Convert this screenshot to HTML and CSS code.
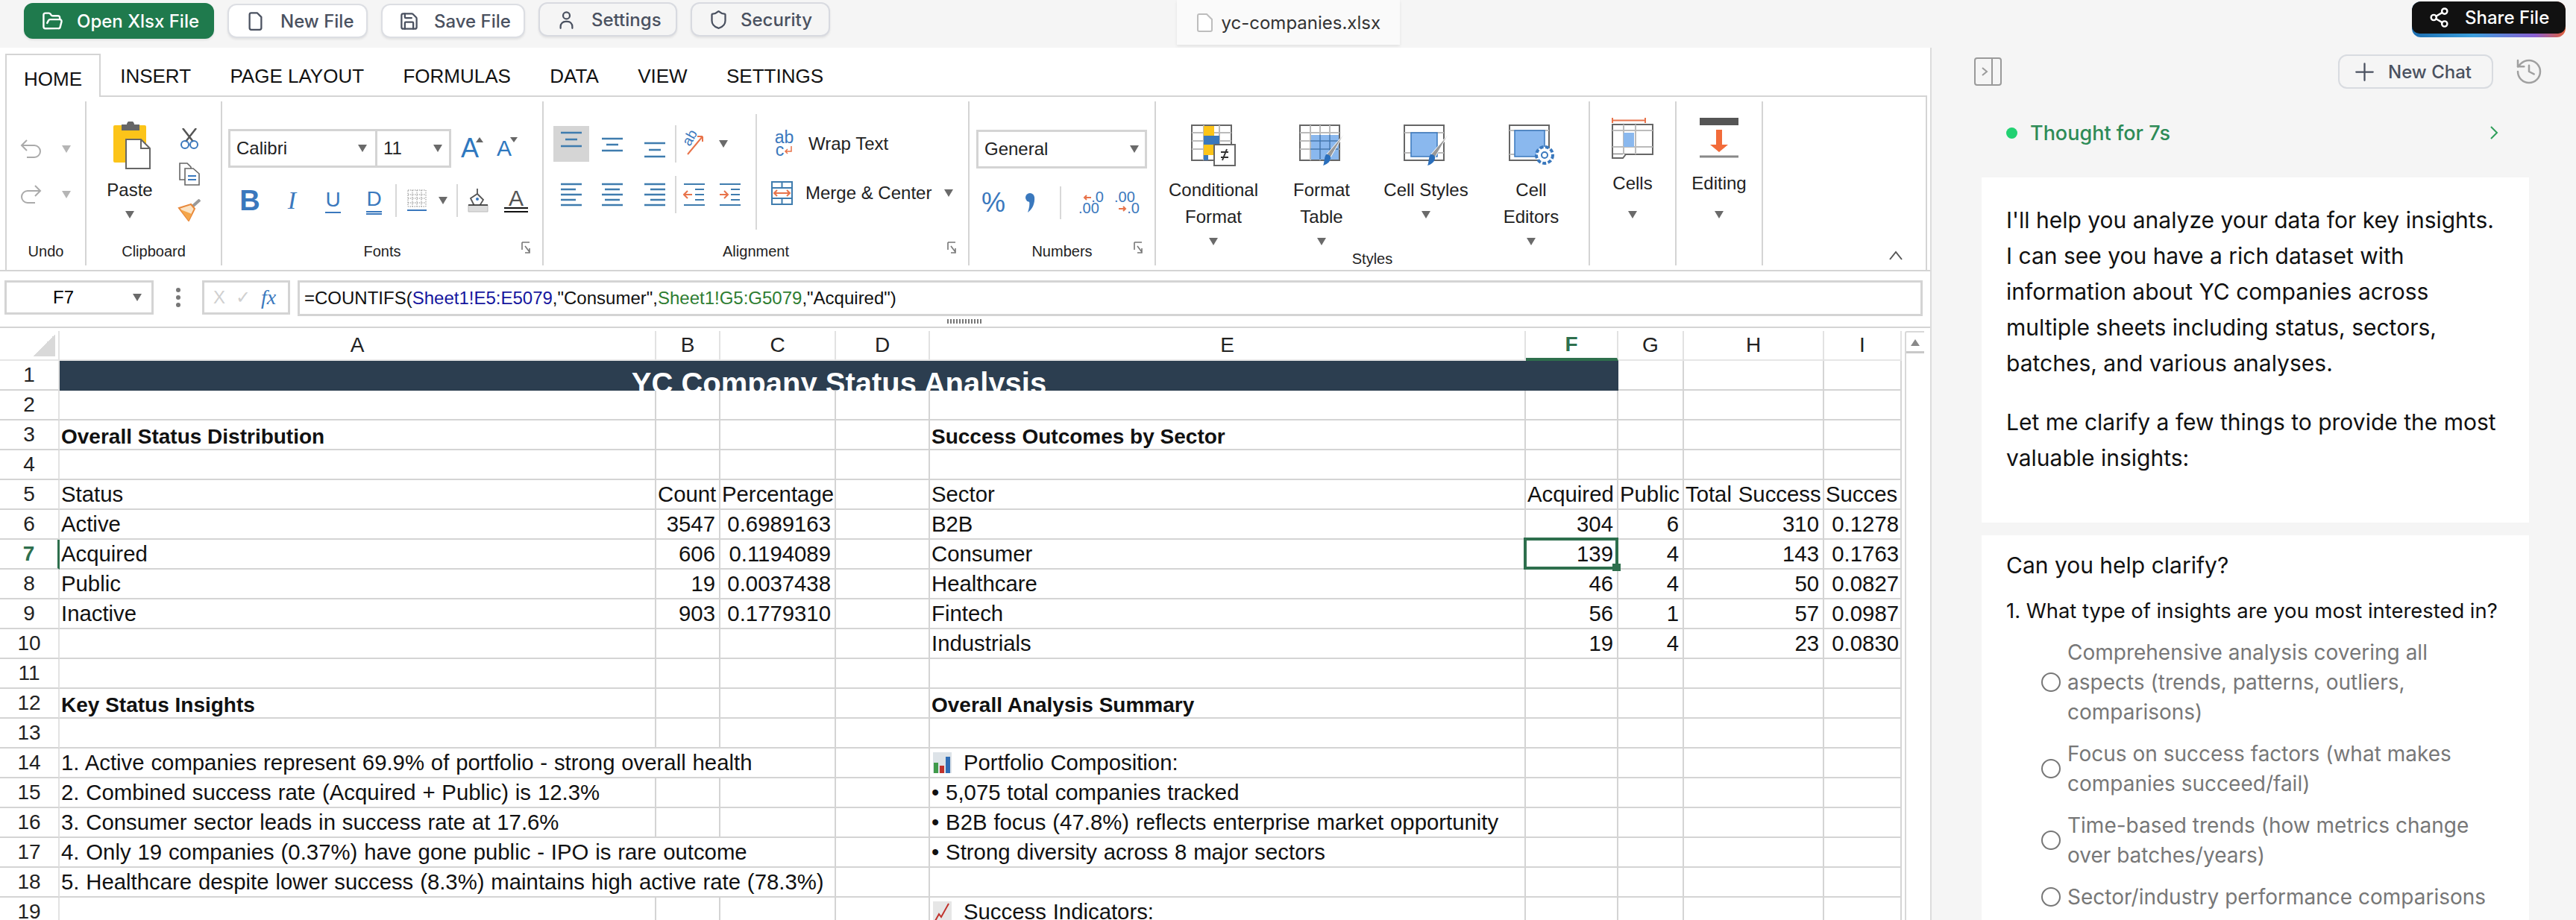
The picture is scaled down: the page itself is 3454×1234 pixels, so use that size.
FILE: index.html
```html
<!DOCTYPE html>
<html lang="en">
<head>
<meta charset="utf-8">
<title>yc-companies.xlsx</title>
<link rel="stylesheet" href="styles.css">
</head>
<body>
<div class="app">
  <header class="topbar">
    <div class="actions">
      <button class="btn primary"><svg class="ic i-29" viewBox="0 0 24 24"><path d="m6 14 1.5-2.9A2 2 0 0 1 9.24 10H20a2 2 0 0 1 1.94 2.5l-1.54 6a2 2 0 0 1-1.95 1.5H4a2 2 0 0 1-2-2V5a2 2 0 0 1 2-2h3.9a2 2 0 0 1 1.69.9l.81 1.2a2 2 0 0 0 1.67.9H18a2 2 0 0 1 2 2v2"/></svg>Open Xlsx File</button>
      <button class="btn w-new"><svg class="ic i-27" viewBox="0 0 24 24"><path d="M14 2H7a2 2 0 0 0-2 2v16a2 2 0 0 0 2 2h10a2 2 0 0 0 2-2V7z"/></svg>New File</button>
      <button class="btn w-save"><svg class="ic i-27" viewBox="0 0 24 24"><path d="M15.2 3a2 2 0 0 1 1.4.6l3.8 3.8a2 2 0 0 1 .6 1.4V19a2 2 0 0 1-2 2H5a2 2 0 0 1-2-2V5a2 2 0 0 1 2-2z"/><path d="M17 21v-7a1 1 0 0 0-1-1H8a1 1 0 0 0-1 1v7"/><path d="M7 3v4a1 1 0 0 0 1 1h7"/></svg>Save File</button>
      <button class="btn ghost w-set"><svg class="ic i-27" viewBox="0 0 24 24"><circle cx="12" cy="7" r="4"/><path d="M5 22v-2a6 6 0 0 1 6-6h2a6 6 0 0 1 6 6v2"/></svg>Settings</button>
      <button class="btn ghost w-sec"><svg class="ic i-27" viewBox="0 0 24 24"><path d="M20 13c0 5-3.5 7.5-7.66 8.95a1 1 0 0 1-.67-.01C7.5 20.5 4 18 4 13V6a1 1 0 0 1 1-1c2 0 4.5-1.2 6.24-2.72a1.17 1.17 0 0 1 1.52 0C14.51 3.81 17 5 19 5a1 1 0 0 1 1 1z"/></svg>Security</button>
    </div>
    <div class="filetab"><svg class="file-ic" viewBox="0 0 21 25"><path d="M3 1h10l7 7v14a2 2 0 0 1-2 2H3a2 2 0 0 1-2-2V3a2 2 0 0 1 2-2z"/></svg>yc-companies.xlsx</div>
    <div class="share-wrap">
      <button class="share"><span class="share-in"><svg class="ic i-29" viewBox="0 0 24 24"><circle cx="18" cy="5" r="3"/><circle cx="6" cy="12" r="3"/><circle cx="18" cy="19" r="3"/><line x1="8.6" y1="13.5" x2="15.4" y2="17.5"/><line x1="15.4" y1="6.5" x2="8.6" y2="10.5"/></svg>Share File</span></button>
    </div>
  </header>

  <main class="main">
    <section class="sheet">
      <nav class="tabs">
        <span class="tab home">HOME</span>
        <span class="tab">INSERT</span>
        <span class="tab">PAGE LAYOUT</span>
        <span class="tab">FORMULAS</span>
        <span class="tab">DATA</span>
        <span class="tab">VIEW</span>
        <span class="tab">SETTINGS</span>
      </nav>
      <div class="ribbon-wrap">
      <div class="ribbon">
        <div class="group g-undo">
          <div class="gbody undo-body">
            <div class="undo-row"><svg width="31" height="26" viewBox="0 0 31 26" class="sv-undo"><path d="M3 8H20a8 8 0 0 1 0 16H10M10 1 3 8l7 7"/></svg><i class="tri"></i></div>
            <div class="undo-row"><svg width="31" height="26" viewBox="0 0 31 26" class="sv-undo"><path d="M28 8H11a8 8 0 0 0 0 16h10M21 1l7 7-7 7"/></svg><i class="tri"></i></div>
          </div>
          <div class="gtitle">Undo</div>
        </div>

        <div class="group g-clip">
          <div class="gbody clip-body">
            <div class="paste">
              <svg width="50" height="64" viewBox="0 0 50 64"><rect y="5" width="44" height="50" rx="2" fill="#fcc419"/><path d="M11 4h7a5 5 0 0 1 10 0h7v8H11z" fill="#666"/><path d="M17 24h20l12 12v27H17z" fill="#fff" stroke="#666" stroke-width="2"/><path d="M37 24v12h12" fill="none" stroke="#666" stroke-width="2"/></svg>
              <div class="tool-label">Paste</div>
              <i class="tri"></i>
            </div>
            <div class="clip-side">
              <svg width="28" height="28" viewBox="0 0 28 28"><path d="M5 0 19 18M23 0 9 18" stroke="#555" stroke-width="2.5" fill="none"/><circle cx="8" cy="22" r="5" fill="none" stroke="#3a78bd" stroke-width="2"/><circle cx="20" cy="22" r="5" fill="none" stroke="#3a78bd" stroke-width="2"/></svg>
              <svg width="28" height="31" viewBox="0 0 28 31"><path d="M1 1h10l5 5v17H1z" fill="#fff" stroke="#666" stroke-width="1.6"/><path d="M8 8h11l8 7v15H8z" fill="#fff" stroke="#666" stroke-width="1.6"/><path d="M12 18h11M12 23h11" stroke="#3a78bd" stroke-width="1.8"/></svg>
              <svg width="32" height="30" viewBox="0 0 32 30"><path d="M20 10 30 1" stroke="#999" stroke-width="4"/><path d="M2 12 18 7l5 6-8 16z" fill="#fbe3c4" stroke="#e8883a" stroke-width="2"/><path d="M4 14 15 29l4-9z" fill="#f4a64a"/></svg>
            </div>
          </div>
          <div class="gtitle">Clipboard</div>
        </div>

        <div class="group g-fonts">
          <div class="gbody">
            <div class="font-row">
              <div class="select font-name"><span>Calibri</span><i class="tri"></i></div>
              <div class="select font-size"><span>11</span><i class="tri"></i></div>
              <span class="grow">A<i class="mini up"></i></span>
              <span class="grow small">A<i class="mini"></i></span>
            </div>
            <div class="fmt-row">
              <span class="fmt bold">B</span>
              <span class="fmt ital">I</span>
              <span class="fmt under">U</span>
              <span class="fmt dbl">D</span>
              <i class="sep"></i>
              <svg width="26" height="30" viewBox="0 0 26 30"><path d="M1 1h24v22H1zM1 7h24M1 12h24M1 18h24M7 1v22M13 1v22M19 1v22" fill="none" stroke="#888" stroke-width="1" stroke-dasharray="1.5 1.5"/><path d="M0 28h26" stroke="#3a78bd" stroke-width="2"/></svg>
              <i class="tri"></i>
              <i class="sep"></i>
              <svg width="28" height="32" viewBox="0 0 28 32"><path d="M13 0v8M4 13l9-6 8 8-5 8H9z" fill="none" stroke="#555" stroke-width="1.8"/><circle cx="13" cy="14" r="2" fill="#3a78bd"/><path d="M1 22h26v9H1z" fill="#ddd" stroke="#bbb"/><path d="M1 22h26" stroke="#222" stroke-width="1.5"/></svg>
              <span class="color-a">A</span>
            </div>
          </div>
          <div class="gtitle">Fonts</div>
          <svg class="corner" viewBox="0 0 14 20"><path d="M1 1h10M1 1v10M5 6l6 8M11 9v6H5" fill="none" stroke="#777" stroke-width="1.6"/></svg>
        </div>

        <div class="group g-align">
          <div class="gbody align-body">
            <div class="align-grid">
              <span class="cell-on"><svg width="48" height="48" viewBox="0 0 48 48" class="sv-line"><path d="M10 9h28M16 18h16M10 27h28"/></svg></span>
              <svg width="48" height="48" viewBox="0 0 48 48" class="sv-line"><path d="M10 17h28M16 25h16M10 33h28"/></svg>
              <svg width="48" height="48" viewBox="0 0 48 48" class="sv-line"><path d="M10 23h28M16 32h16M10 41h28"/></svg>
              <i class="sep tall"></i>
              <span class="orient"><svg width="34" height="36" viewBox="0 0 34 36"><path d="M8 32 28 8M28 8h-7M28 8v7" stroke="#e8734a" stroke-width="2" fill="none"/></svg><span class="orient-t">ab</span></span>
              <i class="tri t-left"></i>
              <svg width="48" height="32" viewBox="0 0 48 32" class="sv-line"><path d="M10 2h28M10 9h20M10 16h28M10 23h20M10 30h28"/></svg>
              <svg width="48" height="32" viewBox="0 0 48 32" class="sv-line"><path d="M10 2h28M14 9h20M10 16h28M14 23h20M10 30h28"/></svg>
              <svg width="48" height="32" viewBox="0 0 48 32" class="sv-line"><path d="M10 2h28M18 9h20M10 16h28M18 23h20M10 30h28"/></svg>
              <i class="sep tall"></i>
              <svg width="30" height="32" viewBox="0 0 30 32"><path d="M1 2h28M1 30h28M16 9h12M16 16h12M16 23h12" stroke="#3f7cae" stroke-width="2"/><path d="M12 16H2M6 11l-5 5 5 5" stroke="#e8734a" stroke-width="2" fill="none"/></svg>
              <svg width="30" height="32" viewBox="0 0 30 32"><path d="M1 2h28M1 30h28M16 9h12M16 16h12M16 23h12" stroke="#3f7cae" stroke-width="2"/><path d="M1 16h10M7 11l5 5-5 5" stroke="#e8734a" stroke-width="2" fill="none"/></svg>
            </div>
            <i class="vsep"></i>
            <div class="wrap-col">
              <div class="wrap-row"><span class="wrap-ic"><span>ab</span><span class="w-c">c<svg width="12" height="12" viewBox="0 0 12 12"><path d="M10 0v7H2M5 4 2 7l3 3" fill="none" stroke="#e8734a" stroke-width="1.5"/></svg></span></span><span>Wrap Text</span></div>
              <div class="wrap-row merge"><svg width="29" height="32" viewBox="0 0 29 32"><path d="M1 1h27v30H1zM1 9h27M1 23h27M14.500 1v8M14.500 23v8" fill="none" stroke="#3f7cae" stroke-width="2"/><path d="M4 16h21M8 12l-4 4 4 4M21 12l4 4-4 4" fill="none" stroke="#e8734a" stroke-width="2"/></svg><span>Merge &amp; Center</span><i class="tri"></i></div>
            </div>
          </div>
          <div class="gtitle">Alignment</div>
          <svg class="corner" viewBox="0 0 14 20"><path d="M1 1h10M1 1v10M5 6l6 8M11 9v6H5" fill="none" stroke="#777" stroke-width="1.6"/></svg>
        </div>

        <div class="group g-num">
          <div class="gbody">
            <div class="select num-select"><span>General</span><i class="tri"></i></div>
            <div class="num-row">
              <span class="pct">%</span>
              <svg width="16" height="28" viewBox="0 0 16 28"><circle cx="8" cy="7" r="6" fill="#3a78bd"/><path d="M14 6c1 9-3 17-9 21 2-6 3-11 2-15z" fill="#3a78bd"/></svg>
              <i class="sep"></i>
              <span class="dec"><span class="dec-l right"><svg width="11" height="10" viewBox="0 0 11 10"><path d="M11 5H2M5 2 2 5l3 3" stroke="#e8734a" stroke-width="2" fill="none"/></svg>.0</span><span class="dec-l">.00</span></span>
              <span class="dec"><span class="dec-l">.00</span><span class="dec-l right"><svg width="11" height="10" viewBox="0 0 11 10"><path d="M0 5h9M6 2l3 3-3 3" stroke="#e8734a" stroke-width="2" fill="none"/></svg>.0</span></span>
            </div>
          </div>
          <div class="gtitle">Numbers</div>
          <svg class="corner" viewBox="0 0 14 20"><path d="M1 1h10M1 1v10M5 6l6 8M11 9v6H5" fill="none" stroke="#777" stroke-width="1.6"/></svg>
        </div>

        <div class="group g-styles">
          <div class="gbody styles-body">
            <div class="stool">
              <svg width="60" height="56" viewBox="0 0 60 56"><rect x="1" y="1" width="53" height="47" fill="#fff" stroke="#666" stroke-width="2"/><path d="M1 11h53M1 22h53M1 33h53M17 1v47M38 1v47" stroke="#bbb" stroke-width="2"/><rect x="17" y="2" width="14" height="13" fill="#fcc419"/><rect x="17" y="15" width="21" height="12" fill="#3a78bd"/><rect x="17" y="27" width="14" height="14" fill="#fcc419"/><rect x="17" y="41" width="6" height="7" fill="#3a78bd"/><rect x="31" y="27" width="28" height="28" fill="#fff" stroke="#666" stroke-width="2"/><path d="M40 37h10M40 44h10M48 33l-6 15" stroke="#333" stroke-width="2"/></svg>
              <div class="tool-label">Conditional<br>Format</div><i class="tri"></i>
            </div>
            <div class="stool">
              <svg width="60" height="56" viewBox="0 0 60 56"><rect x="1" y="1" width="53" height="47" fill="#fff" stroke="#666" stroke-width="2"/><rect x="15" y="14" width="38" height="33" fill="#8ab8ee"/><path d="M1 11h53M1 22h53M1 33h53M15 1v47M28 1v47M41 1v47" stroke="#bbb" stroke-width="2"/><path d="M15 22h38M15 33h38M28 14v33M41 14v33" stroke="#3a78bd" stroke-width="1.5"/><path d="M60 13 42 44l-6-3z" fill="#999" stroke="#fff"/><path d="M36 40c4 0 7 2 6 6-1 5-6 8-10 9 2-3 1-10 4-15z" fill="#2a6ebb"/></svg>
              <div class="tool-label">Format<br>Table</div><i class="tri"></i>
            </div>
            <div class="stool">
              <svg width="60" height="56" viewBox="0 0 60 56"><rect x="1" y="1" width="53" height="47" fill="#fff" stroke="#666" stroke-width="2"/><path d="M1 11h53M1 38h53" stroke="#bbb" stroke-width="2"/><rect x="10" y="11" width="35" height="32" fill="#8ab8ee" stroke="#3a78bd" stroke-width="1.5"/><path d="M60 13 42 44l-6-3z" fill="#999" stroke="#fff"/><path d="M36 40c4 0 7 2 6 6-1 5-6 8-10 9 2-3 1-10 4-15z" fill="#2a6ebb"/></svg>
              <div class="tool-label">Cell Styles</div><i class="tri"></i>
            </div>
            <div class="stool">
              <svg width="64" height="56" viewBox="0 0 64 56"><rect x="3" y="1" width="53" height="47" fill="#fff" stroke="#666" stroke-width="2"/><path d="M3 8h53M3 40h53" stroke="#bbb" stroke-width="2"/><rect x="10" y="8" width="40" height="35" fill="#8ab8ee" stroke="#3a78bd" stroke-width="1.5"/><circle cx="50" cy="41" r="11" fill="#fff" stroke="#3a78bd" stroke-width="4" stroke-dasharray="5 2.500"/><circle cx="50" cy="41" r="4" fill="#fff" stroke="#3a78bd" stroke-width="2"/></svg>
              <div class="tool-label">Cell<br>Editors</div><i class="tri"></i>
            </div>
          </div>
          <div class="gtitle low">Styles</div>
        </div>

        <div class="group g-single">
          <div class="gbody single-body">
            <svg width="56" height="55" viewBox="0 0 56 55"><path d="M1 3.500h44M1 0v7M45 0v7" stroke="#e8734a" stroke-width="2" fill="none"/><rect x="1" y="9" width="54" height="40" fill="#fff" stroke="#666" stroke-width="2"/><path d="M1 17h54M1 39h54M16 9v40M32 9v40" stroke="#bbb" stroke-width="2"/><rect x="16" y="20" width="14" height="19" fill="#8ab8ee"/><path d="M1 49v5h14l4-5" fill="#fff" stroke="#666" stroke-width="2"/></svg>
            <div class="tool-label">Cells</div><i class="tri"></i>
          </div>
        </div>

        <div class="group g-single">
          <div class="gbody single-body">
            <svg width="52" height="55" viewBox="0 0 52 55"><rect width="52" height="10" y="0" fill="#555"/><rect x="1" y="10" width="50" height="42" fill="#fff"/><path d="M0 52h52" stroke="#888" stroke-width="3"/><path d="M22 16h8v20h8L26 46 14 36h8z" fill="#f26b3a"/></svg>
            <div class="tool-label">Editing</div><i class="tri"></i>
          </div>
        </div>

        <div class="rest"><svg width="20" height="14" viewBox="0 0 20 14"><path d="M2 12 10 2l8 10" fill="none" stroke="#555" stroke-width="2"/></svg></div>
      </div>
      </div>

      <div class="formula-bar">
        <div class="namebox"><span>F7</span><i class="tri"></i></div>
        <div class="kebab"><i></i><i></i><i></i></div>
        <div class="fxbox"><span class="fx-x">X</span><span class="fx-c">✓</span><span class="fx-f">fx</span></div>
        <div class="fx-input">=COUNTIFS(<span class="ref-b">Sheet1!E5:E5079</span>,"Consumer",<span class="ref-g">Sheet1!G5:G5079</span>,"Acquired")</div>
      </div>
      <div class="splitter"><i></i></div>

      <div class="gridwrap">
        <table class="grid">
          <colgroup><col class="c0"><col class="ca"><col class="cb"><col class="cc"><col class="cd"><col class="ce"><col class="cf"><col class="cg"><col class="ch"><col class="ci"></colgroup>
          <thead>
            <tr><th class="corner-cell"><i></i></th><th>A</th><th>B</th><th>C</th><th>D</th><th>E</th><th class="on">F</th><th>G</th><th>H</th><th>I</th></tr>
          </thead>
          <tbody>
            <tr><th>1</th><td colspan="6" class="title-cell"><div>YC Company Status Analysis</div></td><td></td><td></td><td></td></tr>
            <tr><th>2</th><td></td><td></td><td></td><td></td><td></td><td></td><td></td><td></td><td></td></tr>
            <tr><th>3</th><td class="b">Overall Status Distribution</td><td></td><td></td><td></td><td class="b">Success Outcomes by Sector</td><td></td><td></td><td></td><td></td></tr>
            <tr><th>4</th><td></td><td></td><td></td><td></td><td></td><td></td><td></td><td></td><td></td></tr>
            <tr><th>5</th><td>Status</td><td>Count</td><td>Percentage</td><td></td><td>Sector</td><td>Acquired</td><td>Public</td><td>Total Success</td><td>Succes</td></tr>
            <tr><th>6</th><td>Active</td><td class="r">3547</td><td class="r">0.6989163</td><td></td><td>B2B</td><td class="r">304</td><td class="r">6</td><td class="r">310</td><td class="r e">0.1278</td></tr>
            <tr><th class="row-on">7</th><td>Acquired</td><td class="r">606</td><td class="r">0.1194089</td><td></td><td>Consumer</td><td class="r sel">139<i class="sel-box"></i><i class="sel-handle"></i></td><td class="r">4</td><td class="r">143</td><td class="r e">0.1763</td></tr>
            <tr><th>8</th><td>Public</td><td class="r">19</td><td class="r">0.0037438</td><td></td><td>Healthcare</td><td class="r">46</td><td class="r">4</td><td class="r">50</td><td class="r e">0.0827</td></tr>
            <tr><th>9</th><td>Inactive</td><td class="r">903</td><td class="r">0.1779310</td><td></td><td>Fintech</td><td class="r">56</td><td class="r">1</td><td class="r">57</td><td class="r e">0.0987</td></tr>
            <tr><th>10</th><td></td><td></td><td></td><td></td><td>Industrials</td><td class="r">19</td><td class="r">4</td><td class="r">23</td><td class="r e">0.0830</td></tr>
            <tr><th>11</th><td></td><td></td><td></td><td></td><td></td><td></td><td></td><td></td><td></td></tr>
            <tr><th>12</th><td class="b">Key Status Insights</td><td></td><td></td><td></td><td class="b">Overall Analysis Summary</td><td></td><td></td><td></td><td></td></tr>
            <tr><th>13</th><td></td><td></td><td></td><td></td><td></td><td></td><td></td><td></td><td></td></tr>
            <tr><th>14</th><td colspan="3">1. Active companies represent 69.9% of portfolio - strong overall health</td><td></td><td><svg class="emoji" width="25" height="28" viewBox="0 0 25 28"><rect width="25" height="28" fill="#dde3e8"/><rect x="1" y="14" width="6" height="14" fill="#3f9a4a"/><rect x="9" y="18" width="6" height="10" fill="#c0322c"/><rect x="17" y="6" width="6" height="22" fill="#2f6db5"/></svg>Portfolio Composition:</td><td></td><td></td><td></td><td></td></tr>
            <tr><th>15</th><td>2. Combined success rate (Acquired + Public) is 12.3%</td><td></td><td></td><td></td><td>• 5,075 total companies tracked</td><td></td><td></td><td></td><td></td></tr>
            <tr><th>16</th><td>3. Consumer sector leads in success rate at 17.6%</td><td></td><td></td><td></td><td>• B2B focus (47.8%) reflects enterprise market opportunity</td><td></td><td></td><td></td><td></td></tr>
            <tr><th>17</th><td colspan="3">4. Only 19 companies (0.37%) have gone public - IPO is rare outcome</td><td></td><td>• Strong diversity across 8 major sectors</td><td></td><td></td><td></td><td></td></tr>
            <tr><th>18</th><td colspan="3">5. Healthcare despite lower success (8.3%) maintains high active rate (78.3%)</td><td></td><td></td><td></td><td></td><td></td><td></td></tr>
            <tr><th>19</th><td></td><td></td><td></td><td></td><td><svg class="emoji" width="25" height="28" viewBox="0 0 25 28"><rect width="25" height="28" fill="#e6e6e6"/><path d="M3 26 8 17l3 4L21 3" fill="none" stroke="#c0322c" stroke-width="2"/></svg>Success Indicators:</td><td></td><td></td><td></td><td></td></tr>
          </tbody>
        </table>
        <div class="vscroll"><div class="vs-up"><i></i></div></div>
      </div>
    </section>

    <aside class="chat">
      <div class="chat-head">
        <svg class="panel-ic" width="37" height="38" viewBox="0 0 37 38"><rect x="1" y="1" width="35" height="36" rx="3"/><path d="M24 1v36M11 14l6 5-6 5"/></svg>
        <button class="newchat"><svg class="ic i-27" viewBox="0 0 24 24"><path d="M12 2v20M2 12h20"/></svg>New Chat</button>
        <svg class="hist-ic" width="40" height="40" viewBox="0 0 24 24"><path d="M3 12a9 9 0 1 0 9-9 9.75 9.75 0 0 0-6.74 2.74L3 8"/><path d="M3 3v5h5"/><path d="M12 7v5l4 2"/></svg>
      </div>
      <div class="thought"><i class="dot"></i><span>Thought for 7s</span><svg width="12" height="20" viewBox="0 0 12 20"><path d="M2 2l8 8-8 8" fill="none" stroke="#2f9e5b" stroke-width="2"/></svg></div>
      <div class="card first">
        <p>I'll help you analyze your data for key insights. I can see you have a rich dataset with information about YC companies across multiple sheets including status, sectors, batches, and various analyses.</p>
        <p>Let me clarify a few things to provide the most valuable insights:</p>
      </div>
      <div class="card second">
        <h3>Can you help clarify?</h3>
        <div class="question">1. What type of insights are you most interested in?</div>
        <ul class="options">
          <li><i class="radio"></i><span>Comprehensive analysis covering all<br>aspects (trends, patterns, outliers,<br>comparisons)</span></li>
          <li><i class="radio"></i><span>Focus on success factors (what makes<br>companies succeed/fail)</span></li>
          <li><i class="radio"></i><span>Time-based trends (how metrics change<br>over batches/years)</span></li>
          <li><i class="radio"></i><span>Sector/industry performance comparisons</span></li>
        </ul>
      </div>
    </aside>
  </main>
</div>
</body>
</html>
```

FILE: styles.css
```css
* { box-sizing: border-box; }
html, body { margin: 0; padding: 0; }
body { background: #f5f5f5; font-family: "Liberation Sans", Arial, sans-serif; color: #000; }
i { display: block; font-style: normal; }
.app { width: 3454px; height: 1234px; display: flex; flex-direction: column; overflow: hidden; }

/* top bar */
.topbar { height: 64px; flex: none; display: grid; grid-template-columns: 1fr auto 1fr; background: #f5f5f5; }
.actions { display: flex; align-items: flex-start; gap: 18px; padding-left: 32px; }
.btn { height: 46px; margin-top: 5px; display: flex; align-items: center; gap: 20px; padding: 0 0 0 22px; font: 500 24px Inter, sans-serif; color: #4a5160; background: #fff; border: 2px solid #dcdee3; border-radius: 12px; box-shadow: 0 2px 3px rgba(0,0,0,.08); white-space: nowrap; }
.btn.primary { width: 255px; height: 48px; margin-top: 4px; background: #1f7a4d; border-color: #1f7a4d; color: #fff; gap: 18px; padding-left: 22px; }
.btn.ghost { margin-top: 3px; background: #f5f5f5; border-color: #d8dae0; }
.w-new { width: 188px; }
.w-save { width: 193px; }
.w-set { width: 186px; }
.w-sec { width: 187px; gap: 16px; }
.ic { fill: none; stroke: currentColor; stroke-width: 2; stroke-linecap: round; stroke-linejoin: round; flex: none; }
.i-29 { width: 29px; height: 29px; }
.i-27 { width: 27px; height: 27px; }
.filetab { width: 299px; height: 60px; padding-left: 27px; display: flex; align-items: center; gap: 12px; background: #fafafa; box-shadow: 0 2px 4px rgba(0,0,0,.08); font: 400 24px Inter, sans-serif; color: #333; white-space: nowrap; }
.file-ic { width: 21px; height: 25px; fill: #fff; stroke: #bdbdbd; stroke-width: 2; flex: none; }
.share-wrap { display: flex; justify-content: flex-end; padding-right: 14px; }
.share { width: 206px; height: 48px; margin-top: 2px; padding: 0 0 5px; border: 0; border-radius: 12px; background: linear-gradient(90deg, #1c6eb0 0%, #3c9fdc 40%, #8a5fd1 80%, #e0603a 100%); }
.share-in { height: 43px; display: flex; align-items: center; gap: 20px; padding-left: 22px; background: #111; border-radius: 12px 12px 10px 10px; color: #fff; font: 500 24px Inter, sans-serif; white-space: nowrap; }

.main { flex: 1; display: flex; min-height: 0; }

/* spreadsheet side */
.sheet { width: 2590px; flex: none; background: #fff; border-right: 2px solid #dcdcdc; display: flex; flex-direction: column; min-height: 0; }
.tabs { height: 66px; flex: none; margin: 0 4px 0 7px; display: flex; align-items: flex-end; border-bottom: 2px solid #d4d4d4; font-size: 26px; }
.tab { height: 50px; padding: 0 26.2px; line-height: 48px; white-space: nowrap; color: #111; }
.tab.home { width: 128px; height: 58px; margin-bottom: -2px; padding: 0; line-height: 64px; text-align: center; background: #fff; border: 2px solid #d4d4d4; border-bottom: 0; }
.ribbon-wrap { flex: none; padding-left: 7px; border-bottom: 2px solid #d4d4d4; }
.ribbon { height: 232px; margin-right: 4px; padding: 6px 0; display: flex; border-left: 2px solid #d4d4d4; border-right: 2px solid #d4d4d4; }
.group { position: relative; height: 220px; flex: none; display: flex; flex-direction: column; border-right: 2px solid #d4d4d4; }
.gbody { flex: 1; min-height: 0; }
.gtitle { height: 38px; flex: none; line-height: 38px; text-align: center; font-size: 20px; color: #222; }
.gtitle.low { padding-top: 20px; line-height: 18px; }
.corner { position: absolute; right: 14px; bottom: 12px; width: 14px; height: 20px; }
.tri { width: 0; height: 0; flex: none; border-left: 6px solid transparent; border-right: 6px solid transparent; border-top: 10px solid #6a6a6a; }
.tool-label { font-size: 24px; line-height: 36px; text-align: center; color: #222; white-space: nowrap; }

.g-undo { width: 107px; }
.undo-body { padding: 51px 0 0 17px; display: flex; flex-direction: column; gap: 35px; }
.undo-row { display: flex; align-items: center; gap: 26px; }
.undo-row .tri { border-top-color: #b5b5b5; }
.sv-undo { fill: none; stroke: #aaa; stroke-width: 2; }

.g-clip { width: 182px; }
.clip-body { display: flex; }
.paste { width: 116px; padding-top: 27px; display: flex; flex-direction: column; align-items: center; }
.paste svg { margin-left: 6px; }
.paste .tool-label { margin-top: 10px; }
.paste .tri { margin-top: 10px; }
.clip-side { width: 44px; padding-top: 36px; display: flex; flex-direction: column; align-items: center; gap: 18px; }

.g-fonts { width: 431px; }
.select { height: 52px; display: flex; align-items: center; justify-content: space-between; background: #fff; border: 3px solid #d4d4d4; font-size: 24px; color: #222; }
.font-row { margin: 37px 0 0 8px; display: flex; align-items: center; }
.font-name { width: 200px; padding: 0 11px 0 8px; }
.font-size { width: 99px; padding: 0 9px 0 8px; border-left-width: 0; }
.grow { position: relative; width: 24px; margin-left: 13px; font-size: 36px; line-height: 38px; color: #2f78bf; }
.grow.small { width: 22px; margin-left: 24px; font-size: 30px; }
.mini { position: absolute; right: -6px; top: 4px; width: 0; height: 0; border-left: 5px solid transparent; border-right: 5px solid transparent; border-top: 7px solid #666; }
.mini.up { border-top: 0; border-bottom: 7px solid #666; }
.fmt-row { margin: 22px 0 0 8px; height: 32px; display: grid; grid-template-columns: 58px 55px 55px 55px 4px 52px 18px 20px 36px 66px; justify-items: center; align-items: center; }
.fmt { font-size: 34px; line-height: 32px; color: #3a78bd; }
.fmt.bold { font-weight: 700; font-size: 38px; }
.fmt.ital { font-family: "Liberation Serif", serif; font-style: italic; }
.fmt.under { border-bottom: 2px solid #3a78bd; font-size: 28px; }
.fmt.dbl { border-bottom: 5px double #3a78bd; font-size: 28px; }
.color-a { width: 32px; height: 32px; border-bottom: 7px double #111; font-size: 30px; line-height: 26px; text-align: center; color: #555; }
.sep { width: 2px; height: 44px; background: #d8d8d8; }
.sep.tall { height: 50px; }

.g-align { width: 571px; }
.align-body { display: flex; }
.align-grid { margin: 33px 0 0 13px; display: grid; grid-template-columns: 48px 62px 52px 4px 46px 50px; grid-template-rows: 48px 32px; row-gap: 28px; justify-items: center; align-items: center; }
.cell-on { width: 48px; height: 48px; background: #d5d5d5; display: block; }
.sv-line { fill: none; stroke: #3f7cae; stroke-width: 2.500; display: block; }
.orient { position: relative; width: 34px; height: 36px; display: block; }
.orient-t { position: absolute; left: 0; top: 0; font-size: 19px; line-height: 19px; color: #3a78bd; transform: rotate(-60deg); }
.t-left { margin-right: 18px; }
.vsep { width: 2px; height: 155px; margin: 17px 0 0 9px; background: #d8d8d8; flex: none; }
.wrap-col { padding: 37px 0 0 19px; display: flex; flex-direction: column; gap: 26px; }
.wrap-row { height: 40px; display: flex; align-items: center; font-size: 24px; color: #222; white-space: nowrap; }
.wrap-ic { width: 23px; margin-left: 6px; margin-right: 21px; display: flex; flex-direction: column; align-items: center; font-size: 23px; line-height: 17px; color: #3a78bd; }
.w-c { display: flex; align-items: center; }
.merge { gap: 17px; }

.g-num { width: 250px; }
.num-select { width: 229px; margin: 38px 0 0 9px; padding: 0 8px 0 8px; }
.num-row { margin-top: 24px; display: grid; grid-template-columns: 64px 34px 48px 34px 62px; justify-items: center; align-items: center; height: 30px; }
.pct { font-size: 36px; line-height: 30px; color: #3a78bd; }
.dec { width: 34px; display: flex; flex-direction: column; font-size: 20px; line-height: 15px; color: #3a78bd; }
.dec-l { display: flex; align-items: center; justify-content: flex-start; }
.dec-l.right { justify-content: flex-end; }

.g-styles { width: 582px; }
.styles-body { display: grid; grid-template-columns: 154px 136px 144px 138px; }
.stool { padding-top: 31px; display: flex; flex-direction: column; align-items: center; }
.stool .tool-label { margin-top: 14px; }
.stool .tri { margin-top: 10px; }

.g-single { width: 116px; }
.single-body { padding-top: 22px; display: flex; flex-direction: column; align-items: center; }
.single-body .tool-label { margin-top: 15px; }
.single-body .tri { margin-top: 19px; }

.rest { flex: 1; display: flex; justify-content: flex-end; align-items: flex-end; padding: 0 30px 6px 0; }

/* formula bar */
.formula-bar { height: 60px; flex: none; padding-top: 12px; display: flex; align-items: flex-start; }
.namebox { width: 200px; height: 46px; margin-left: 6px; padding: 0 13px 0 62px; display: flex; align-items: center; justify-content: space-between; border: 3px solid #d4d4d4; font-size: 24px; }
.kebab { width: 65px; height: 46px; display: flex; flex-direction: column; align-items: center; justify-content: center; gap: 4px; }
.kebab i { width: 6px; height: 6px; border-radius: 50%; background: #777; }
.fxbox { width: 118px; height: 46px; padding-left: 12px; display: flex; align-items: center; gap: 14px; border: 3px solid #d4d4d4; font-size: 24px; }
.fx-x, .fx-c { color: #d0d0d0; }
.fx-f { font-family: "Liberation Serif", serif; font-style: italic; color: #3a78bd; font-size: 28px; }
.fx-input { width: 2179px; height: 48px; margin-left: 10px; padding-left: 6px; display: flex; align-items: center; white-space: pre; border: 3px solid #d4d4d4; font-size: 24px; color: #111; }
.ref-b { color: #16169e; }
.ref-g { color: #2e7d32; }
.splitter { height: 16px; flex: none; display: flex; justify-content: center; align-items: center; border-bottom: 2px solid #d4d4d4; }
.splitter i { width: 48px; height: 6px; background: repeating-linear-gradient(90deg, #777 0 2px, transparent 2px 4px); }

/* grid */
.gridwrap { flex: 1; min-height: 0; padding-top: 4px; display: flex; align-items: flex-start; overflow: hidden; }
.grid { width: 2550px; flex: none; table-layout: fixed; border-collapse: separate; border-spacing: 0; font-size: 29.33px; }
.c0 { width: 80px; } .ca { width: 800px; } .cb { width: 86px; } .cc { width: 155px; } .cd { width: 126px; }
.ce { width: 799px; } .cf { width: 124px; } .cg { width: 88px; } .ch { width: 188px; } .ci { width: 104px; }
.grid th { height: 40px; padding: 0; font-weight: 400; font-size: 28px; text-align: center; color: #222; border-right: 2px solid #e2e2e2; border-bottom: 2px solid #d4d4d4; }
.grid thead th { border-bottom-color: #e6e6e6; }
.grid thead th.on { color: #2e6f4d; font-weight: 700; border-bottom: 4px solid #2e6f4d; }
.grid td { height: 40px; padding: 0 5px 0 2px; overflow: hidden; white-space: nowrap; word-spacing: .7px; color: #111; border-right: 2px solid #d4d4d4; border-bottom: 2px solid #d4d4d4; }
.grid .r { text-align: right; }
.grid .e { padding-right: 2px; }
.grid .b { padding-top: 5px; font-weight: 700; font-size: 28px; word-spacing: 0; }
.corner-cell { position: relative; }
.corner-cell i { position: absolute; left: 44px; top: 4px; width: 30px; height: 30px; background: linear-gradient(135deg, transparent 50%, #d9d9d9 50%); }
.grid tbody th.row-on { color: #2e6f4d; font-weight: 700; border-right: 3px solid #2e6f4d; }
.grid td.title-cell { padding: 0; background: #2c3e50; border-right: 0; border-bottom: 0; }
.title-cell div { height: 39px; overflow: hidden; padding-top: 9px; line-height: 40px; font-size: 40px; font-weight: 700; color: #fff; text-align: center; word-spacing: 0; }
.grid td.sel { position: relative; overflow: visible; }
.sel-box { position: absolute; left: -3px; top: -3px; right: -2px; bottom: -2px; border: 4px solid #2e6f4d; }
.sel-handle { position: absolute; right: -5px; bottom: -4px; width: 11px; height: 10px; background: #2e6f4d; }
.emoji { vertical-align: -4px; margin: 0 16px 0 2px; }
.vscroll { width: 26px; margin-left: 4px; flex: none; height: 800px; border: 2px solid #d8d8d8; border-right: 0; border-bottom: 0; border-radius: 3px 0 0 0; }
.vs-up { height: 28px; padding: 9px 0 0 6px; border-bottom: 3px solid #c9c9c9; }
.vs-up i { width: 0; height: 0; border-left: 6px solid transparent; border-right: 6px solid transparent; border-bottom: 9px solid #888; }

/* chat side */
.chat { flex: 1; background: #f5f5f5; font-family: Inter, sans-serif; min-width: 0; }
.chat-head { height: 46px; margin-top: 9px; padding: 0 43px 0 57px; display: flex; align-items: center; }
.panel-ic { fill: none; stroke: #9a9a9a; stroke-width: 2; }
.newchat { width: 208px; height: 46px; margin-left: auto; padding-left: 20px; display: flex; align-items: center; gap: 18px; background: #f5f5f5; border: 2px solid #d8dbe0; border-radius: 12px; font: 500 24px Inter, sans-serif; color: #4a5160; white-space: nowrap; }
.hist-ic { margin-left: 28px; fill: none; stroke: #a0a0a0; stroke-width: 1.5; stroke-linecap: round; stroke-linejoin: round; }
.thought { height: 56px; margin: 31px 104px 0 100px; display: flex; align-items: center; font-size: 27px; font-weight: 500; color: #2e8b57; }
.dot { width: 15px; height: 15px; margin-right: 17px; border-radius: 50%; background: #22d172; }
.thought svg { margin-left: auto; }
.card { margin: 0 63px 0 67px; padding: 0 33px; background: #fff; }
.card.first { height: 463px; margin-top: 32px; padding-top: 33px; font-size: 30px; line-height: 48px; color: #111; }
.card.first p { margin: 0 0 31px; }
.card.second { margin-top: 17px; height: 600px; padding-top: 16px; color: #111; }
.card h3 { margin: 0; font-size: 30px; line-height: 48px; font-weight: 400; }
.question { margin-top: 17px; font-size: 27.4px; line-height: 40px; }
.options { list-style: none; margin: 16px 0 0; padding: 0 0 0 47px; display: flex; flex-direction: column; gap: 16px; font-size: 28px; line-height: 40px; color: #777; }
.options li { display: flex; align-items: center; gap: 9px; white-space: nowrap; }
.radio { width: 26px; height: 26px; flex: none; border: 2px solid #777; border-radius: 50%; }
```
